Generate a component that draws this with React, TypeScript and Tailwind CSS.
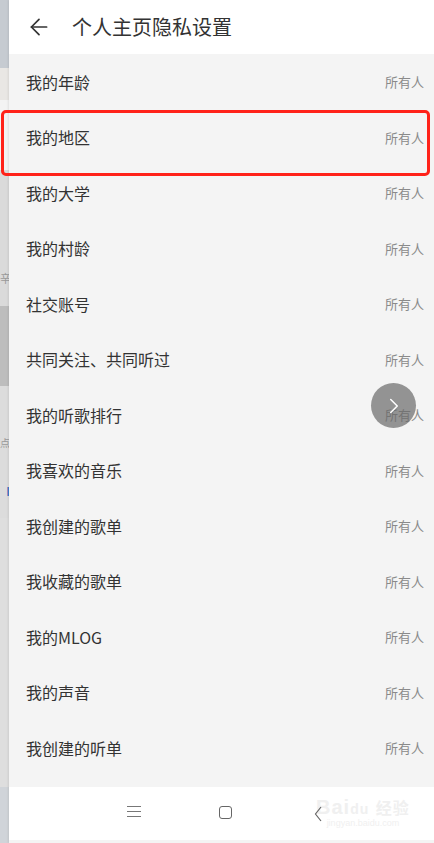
import { ArrowLeft, ChevronRight } from 'lucide-react'

const items = [
  '我的年龄',
  '我的地区',
  '我的大学',
  '我的村龄',
  '社交账号',
  '共同关注、共同听过',
  '我的听歌排行',
  '我喜欢的音乐',
  '我创建的歌单',
  '我收藏的歌单',
  '我的MLOG',
  '我的声音',
  '我创建的听单',
]

export default function App() {
  return (
    <div
      className="relative flex w-[434px] h-[843px] overflow-hidden bg-white"
      style={{ fontFamily: '"Noto Sans CJK SC", "Noto Sans", sans-serif' }}
    >
      {/* page behind, peeking on the left */}
      <div className="flex flex-col w-[9px] shrink-0 overflow-hidden">
        <div className="h-[68px] bg-[#c6cbd1]" />
        <div className="h-[32px] bg-[#e9e7e4]" />
        <div className="h-[70px] bg-[#f3f3f3]" />
        <div className="h-[136px] bg-[#dadada] flex items-end pb-[22px] text-[11px] text-[#999] leading-none">辛</div>
        <div className="h-[80px] bg-[#bdbdbd]" />
        <div className="h-[62px] bg-[#dcdcdc] text-[10px] text-[#999] leading-none flex items-end">点</div>
        <div className="h-[70px] bg-[#dcdcdc] text-[15px] text-[#1f4fb5] leading-none pt-[36px]">刂</div>
        <div className="flex-1 bg-[#dedede]" />
        <div className="h-[56px] bg-[#d0d4d9]" />
      </div>

      <div className="flex flex-col flex-1 shadow-[-1px_0_2px_rgba(0,0,0,0.08)]">
        {/* header */}
        <div className="h-[54px] flex items-center bg-white">
          <ArrowLeft size={26} strokeWidth={1.6} className="ml-[17px] text-[#333]" />
          <span className="ml-[20px] text-[20px] text-[#333]">个人主页隐私设置</span>
        </div>

        {/* list */}
        <div className="h-[733px] bg-[#f4f4f4]">
          {items.map(label => (
            <div key={label} className="h-[55.5px] flex items-center justify-between pl-[17px] pr-[10px]">
              <span className="text-[16px] text-[#333]">{label}</span>
              <span className="text-[13px] text-[#8a8a8a]">所有人</span>
            </div>
          ))}
        </div>

        {/* nav bar */}
        <div className="relative h-[53px] bg-white">
          <div className="absolute left-[118px] top-[19px] flex flex-col gap-[4px]">
            <div className="w-[14px] h-px bg-[#777]" />
            <div className="w-[14px] h-px bg-[#777]" />
            <div className="w-[14px] h-px bg-[#777]" />
          </div>
          <div className="absolute left-[210px] top-[19px] w-[13px] h-[13px] rounded-[3px] border border-[#666]" />
          <div className="absolute left-[307px] top-[10px] flex flex-col items-center leading-none">
            <span className="text-[20px] font-bold text-[#f0f0f0] tracking-[1px]" style={{ fontFamily: '"Liberation Sans", sans-serif' }}>
              Bai<span className="text-[14px]">du</span> <span className="text-[16px]" style={{ fontFamily: '"Noto Sans CJK SC", sans-serif' }}>经验</span>
            </span>
            <span className="text-[9px] text-[#f0f0f0] mt-[2px]" style={{ fontFamily: '"Liberation Sans", sans-serif' }}>jingyan.baidu.com</span>
          </div>
          <svg className="absolute left-[305px] top-[19px]" width="9" height="16" viewBox="0 0 9 16">
            <path d="M7 1 L1.5 8 L7 15" fill="none" stroke="#666" strokeWidth="1.2" />
          </svg>
        </div>
        <div className="h-[3px] bg-[#f4f4f4]" />
      </div>

      {/* highlight box */}
      <div className="absolute left-[1px] top-[110px] w-[429px] h-[66px] rounded-[5px] border-[3px] border-[#ff2219]" />

      {/* floating button */}
      <div className="absolute left-[371px] top-[383px] w-[45px] h-[45px] rounded-full bg-[#6a6a6a]/70 flex items-center justify-center">
        <ChevronRight size={26} strokeWidth={1.4} className="text-white" />
      </div>
    </div>
  )
}
